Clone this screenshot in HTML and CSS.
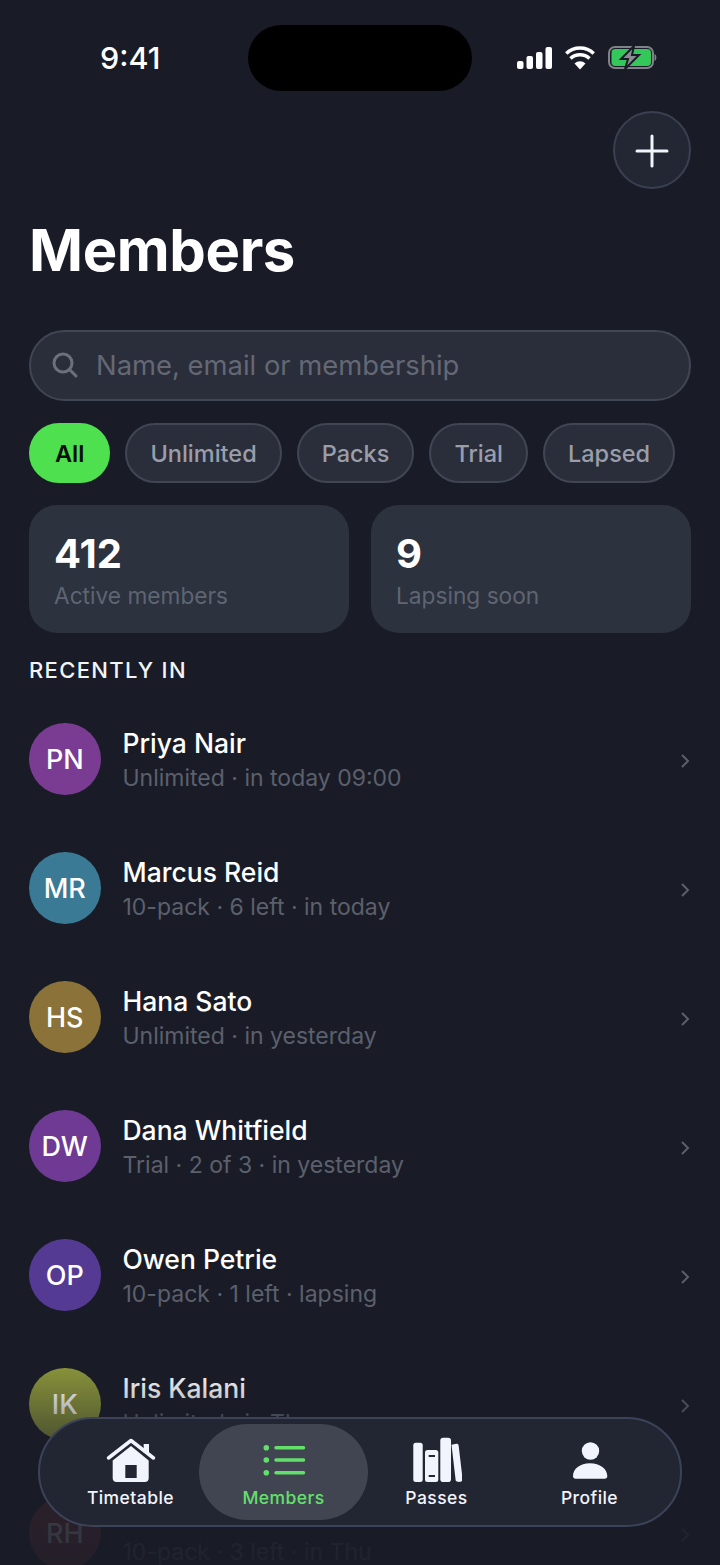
FILE: index.html
```html
<!DOCTYPE html>
<html lang="en">
<head>
<meta charset="utf-8">
<title>Members</title>
<link rel="stylesheet" href="styles.css">
</head>
<body>
<div class="screen">
  <header class="status">
    <span class="time">9:41</span>
    <div class="island"></div>
    <div class="status-icons">
      <svg width="35" height="24" viewBox="0 0 35 24"><rect x="0" y="15" width="6.500" height="8" rx="2" fill="#fff"/><rect x="9.500" y="10" width="6.500" height="13" rx="2" fill="#fff"/><rect x="19" y="6" width="6.500" height="17" rx="2" fill="#fff"/><rect x="28.500" y="1" width="6.500" height="22" rx="2" fill="#fff"/></svg>
      <svg width="30" height="24" viewBox="0 0 30 24"><path d="M15 23.500l-5.500-6a8 8 0 0 1 11 0z" fill="#fff"/><path d="M5.500 12.500a14 14 0 0 1 19 0M1.300 7.500a20 20 0 0 1 27.400 0" fill="none" stroke="#fff" stroke-width="3.600"/></svg>
      <svg width="49" height="25" viewBox="0 0 49 25"><rect x="1" y="2" width="44" height="21" rx="6" fill="none" stroke="#7f8287" stroke-width="2"/><rect x="3.500" y="4" width="39.500" height="17" rx="4" fill="#34c759"/><path d="M46.500 9c2.500.5 2.500 6.500 0 7z" fill="#7f8287"/><path d="M26 1L13 14h7l-3 10 14-14h-7z" fill="#8a8d92" stroke="#191c27" stroke-width="2"/></svg>
    </div>
  </header>

  <div class="top-action">
    <button class="add-btn" aria-label="Add">
      <svg width="34" height="34" viewBox="0 0 34 34"><path d="M17 2v30M2 17h30" stroke="#f2f4fb" stroke-width="3" stroke-linecap="round"/></svg>
    </button>
  </div>

  <h1 class="title">Members</h1>

  <div class="search">
    <svg width="28" height="28" viewBox="0 0 28 28"><circle cx="12" cy="12" r="9" fill="none" stroke="#6c707c" stroke-width="3"/><path d="M18.500 18.500L25 25" stroke="#6c707c" stroke-width="3" stroke-linecap="round"/></svg>
    <span class="search-text">Name, email or membership</span>
  </div>

  <div class="chips">
    <span class="chip chip-on">All</span>
    <span class="chip">Unlimited</span>
    <span class="chip">Packs</span>
    <span class="chip">Trial</span>
    <span class="chip">Lapsed</span>
  </div>

  <div class="stats">
    <div class="stat"><div class="stat-num">412</div><div class="stat-label">Active members</div></div>
    <div class="stat"><div class="stat-num">9</div><div class="stat-label">Lapsing soon</div></div>
  </div>

  <div class="section">RECENTLY IN</div>

  <div class="list">
    <div class="row"><div class="avatar av-pn">PN</div><div class="info"><div class="name">Priya Nair</div><div class="sub">Unlimited · in today 09:00</div></div><svg class="chev" width="10" height="16" viewBox="0 0 10 16"><path d="M2 2l6 6-6 6" fill="none" stroke="#5b5f6b" stroke-width="2"/></svg></div>
    <div class="row"><div class="avatar av-mr">MR</div><div class="info"><div class="name">Marcus Reid</div><div class="sub">10-pack · 6 left · in today</div></div><svg class="chev" width="10" height="16" viewBox="0 0 10 16"><path d="M2 2l6 6-6 6" fill="none" stroke="#5b5f6b" stroke-width="2"/></svg></div>
    <div class="row"><div class="avatar av-hs">HS</div><div class="info"><div class="name">Hana Sato</div><div class="sub">Unlimited · in yesterday</div></div><svg class="chev" width="10" height="16" viewBox="0 0 10 16"><path d="M2 2l6 6-6 6" fill="none" stroke="#5b5f6b" stroke-width="2"/></svg></div>
    <div class="row"><div class="avatar av-dw">DW</div><div class="info"><div class="name">Dana Whitfield</div><div class="sub">Trial · 2 of 3 · in yesterday</div></div><svg class="chev" width="10" height="16" viewBox="0 0 10 16"><path d="M2 2l6 6-6 6" fill="none" stroke="#5b5f6b" stroke-width="2"/></svg></div>
    <div class="row"><div class="avatar av-op">OP</div><div class="info"><div class="name">Owen Petrie</div><div class="sub">10-pack · 1 left · lapsing</div></div><svg class="chev" width="10" height="16" viewBox="0 0 10 16"><path d="M2 2l6 6-6 6" fill="none" stroke="#5b5f6b" stroke-width="2"/></svg></div>
    <div class="row"><div class="avatar av-ik">IK</div><div class="info"><div class="name">Iris Kalani</div><div class="sub">Unlimited · in Thu</div></div><svg class="chev" width="10" height="16" viewBox="0 0 10 16"><path d="M2 2l6 6-6 6" fill="none" stroke="#5b5f6b" stroke-width="2"/></svg></div>
    <div class="row"><div class="avatar av-rh">RH</div><div class="info"><div class="name"></div><div class="sub">10-pack · 3 left · in Thu</div></div><svg class="chev" width="10" height="16" viewBox="0 0 10 16"><path d="M2 2l6 6-6 6" fill="none" stroke="#5b5f6b" stroke-width="2"/></svg></div>
  </div>

  <div class="fade"></div>

  <nav class="tabbar">
    <div class="tab">
      <svg width="50" height="46" viewBox="0 0 50 46"><path d="M6.700 24.500L25 10l17.700 14.500V42a4 4 0 0 1-4 4H10.700a4 4 0 0 1-4-4z" fill="#f2f4fd"/><path d="M2.500 22L25 4.500 47.500 22" fill="none" stroke="#f2f4fd" stroke-width="3.500" stroke-linecap="round" stroke-linejoin="round"/><rect x="37.700" y="8" width="5.300" height="9" fill="#f2f4fd"/><rect x="19.300" y="29" width="11.400" height="13" fill="#232734"/></svg>
      <span class="tab-label">Timetable</span>
    </div>
    <div class="tab tab-on">
      <svg width="44" height="46" viewBox="0 0 44 46"><circle cx="4.300" cy="11.700" r="2.800" fill="#63e06c"/><circle cx="4.300" cy="24" r="2.800" fill="#63e06c"/><circle cx="4.300" cy="36.700" r="2.800" fill="#63e06c"/><path d="M14 11.700h27.500M14 24h27.500M14 36.700h27.500" stroke="#63e06c" stroke-width="3.500" stroke-linecap="round"/></svg>
      <span class="tab-label">Members</span>
    </div>
    <div class="tab">
      <svg width="50" height="46" viewBox="0 0 50 46"><rect x="1.300" y="6.700" width="9.400" height="39.300" rx="2.500" fill="#f2f4fd"/><rect x="13" y="14" width="13.300" height="32" rx="2.500" fill="#f2f4fd"/><rect x="28.300" y="1.700" width="10.700" height="44.300" rx="2.800" fill="#f2f4fd"/><path d="M39.500 8.700l5-.9c1-.2 1.900.5 2.100 1.500l4 33.700c.2 1.400-.7 2.600-2.100 2.800-1.800.3-3.800.3-4.800-1.200z" fill="#f2f4fd"/><path d="M16.700 20h6.300M16.700 40h6.300" stroke="#232734" stroke-width="2"/></svg>
      <span class="tab-label">Passes</span>
    </div>
    <div class="tab">
      <svg width="36" height="46" viewBox="0 0 36 46"><circle cx="18.500" cy="15" r="8.700" fill="#f2f4fd"/><path d="M1 40C1 33 8 27.300 18 27.300S35.300 33 35.300 40a2.700 2.700 0 0 1-2.700 2.700H3.700A2.700 2.700 0 0 1 1 40z" fill="#f2f4fd"/></svg>
      <span class="tab-label">Profile</span>
    </div>
  </nav>
</div>
</body>
</html>
```
FILE: styles.css
```css
* { box-sizing: border-box; }
html, body { margin: 0; padding: 0; }
body { background: #191c27; font-family: Inter, "Liberation Sans", sans-serif; color: #fff; }
.screen { position: relative; width: 720px; height: 1565px; overflow: hidden; background: #191c27; padding: 0 29px; }

.status { position: relative; display: flex; align-items: center; justify-content: space-between; height: 66px; margin-top: 25px; }
.time { margin: -2px 0 0 71px; font-size: 30.500px; font-weight: 500; color: #fff; }
.island { position: absolute; left: 219px; top: 0; width: 224px; height: 66px; border-radius: 33px; background: #000; }
.status-icons { display: flex; align-items: center; gap: 13px; margin: -1px 34px 0 0; }

.top-action { display: flex; justify-content: flex-end; margin-top: 20px; }
.add-btn { width: 78px; height: 78px; padding: 2px 0 0; border-radius: 50%; border: 2px solid #3a4052; background: #232733; display: flex; align-items: center; justify-content: center; }

.title { margin: 23px 0 0; font-size: 58px; line-height: 76px; font-weight: 700; letter-spacing: -0.4px; color: #fff; }

.search { display: flex; align-items: center; gap: 17px; height: 71px; margin-top: 42px; padding: 0 20px 2px; border-radius: 36px; border: 2px solid #414654; background: #2a2e3a; }
.search-text { font-size: 27.400px; color: #646875; }

.chips { display: flex; gap: 15px; margin-top: 22px; }
.chip { display: flex; align-items: center; height: 60px; padding: 0 23px; border-radius: 30px; border: 2px solid #414654; background: #2a2e3a; font-size: 23.500px; font-weight: 500; color: #9a9eaa; }
.chip-on { padding: 0 24px; background: #4fe04f; border-color: #4fe04f; color: #0a0f0a; font-weight: 600; }

.stats { display: flex; gap: 22px; margin-top: 22px; }
.stat { flex: 1; height: 128px; padding: 25px 25px; border-radius: 28px; background: #2c323e; }
.stat-num { font-size: 40px; line-height: 48px; font-weight: 700; color: #fff; }
.stat-label { margin-top: 2px; font-size: 22.700px; line-height: 32px; color: #5f6572; }

.section { margin-top: 22px; font-size: 22px; line-height: 30px; font-weight: 500; letter-spacing: 1.350px; color: #f2f4f8; }

.list { margin-top: 38px; }
.row { display: flex; align-items: center; gap: 22px; height: 72px; margin-bottom: 57px; }
.avatar { flex: none; width: 71.500px; height: 72px; border-radius: 50%; display: flex; align-items: center; justify-content: center; font-size: 27px; font-weight: 500; color: #fff; }
.av-pn { background: #7a3b93; }
.av-mr { background: #3a7a94; }
.av-hs { background: #8a7238; }
.av-dw { background: #6f3a94; }
.av-op { background: #553a94; }
.av-ik { background: #8a943a; }
.av-rh { background: #943a3a; }
.info { flex: 1; min-width: 0; padding-top: 3px; }
.name { min-height: 34px; font-size: 26.500px; line-height: 34px; font-weight: 500; color: #fff; }
.sub { margin-top: 1px; font-size: 23px; line-height: 34px; color: #5c606c; }
.chev { flex: none; margin: 4px 1px 0 0; }

.fade { position: absolute; left: 0; right: 0; top: 1365px; height: 200px; background: linear-gradient(to bottom, rgba(25,28,39,0) 0%, rgba(25,28,39,0.85) 60%, rgba(25,28,39,0.9) 100%); }

.tabbar { position: absolute; left: 38px; top: 1417px; width: 644px; height: 110px; display: flex; align-items: stretch; padding: 5px 14px; border-radius: 55px; border: 2px solid #3c4358; background: #222632; }
.tab { flex: 0 0 153px; display: flex; flex-direction: column; align-items: center; justify-content: flex-end; gap: 5px; padding-bottom: 11px; border-radius: 48px; }
.tab-label { font-size: 17.500px; line-height: 22px; font-weight: 450; letter-spacing: 0.45px; color: #f2f4fd; }
.tab-on { flex: 0 0 169px; margin: 0 -8px; background: #414552; }
.tab-on .tab-label { color: #63e06c; }
```
